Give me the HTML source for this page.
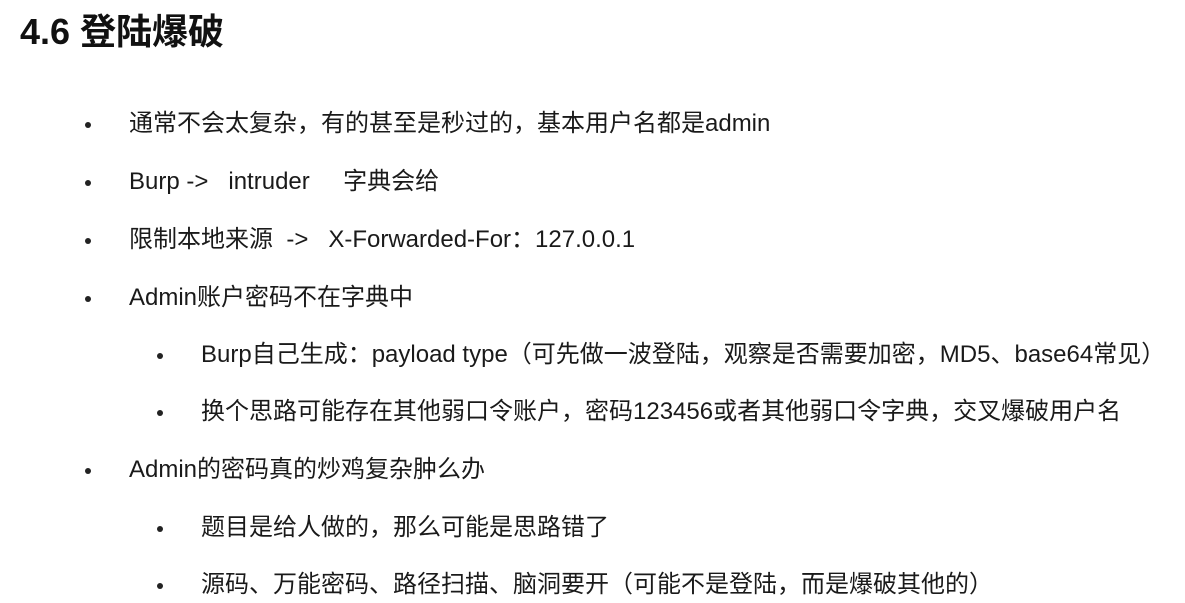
<!DOCTYPE html>
<html><head><meta charset="utf-8"><style>
body{margin:0;width:1185px;height:603px;background:#fff;overflow:hidden;font-family:"Liberation Sans","Noto Sans CJK SC",sans-serif;color:#1a1a1a;position:relative}
.t{position:absolute;left:20px;top:9px;font-size:36px;font-weight:bold;line-height:46px;color:#111}
.l{position:absolute;font-size:24px;line-height:30px;white-space:pre}
.b{position:absolute;width:6px;height:6px;border-radius:50%;background:#222}
</style></head><body>
<div class="t">4.6 登陆爆破</div>
<div class="b" style="left:85px;top:122px"></div><div class="l" style="left:129px;top:109px">通常不会太复杂，有的甚至是秒过的，基本用户名都是admin</div>
<div class="b" style="left:85px;top:180px"></div><div class="l" style="left:129px;top:167px">Burp ->   intruder     字典会给</div>
<div class="b" style="left:85px;top:238px"></div><div class="l" style="left:129px;top:225px">限制本地来源  ->   X-Forwarded-For：127.0.0.1</div>
<div class="b" style="left:85px;top:296px"></div><div class="l" style="left:129px;top:283px">Admin账户密码不在字典中</div>
<div class="b" style="left:157px;top:353px"></div><div class="l" style="left:201px;top:340px">Burp自己生成：payload type（可先做一波登陆，观察是否需要加密，MD5、base64常见）</div>
<div class="b" style="left:157px;top:410px"></div><div class="l" style="left:201px;top:397px">换个思路可能存在其他弱口令账户，密码123456或者其他弱口令字典，交叉爆破用户名</div>
<div class="b" style="left:85px;top:468px"></div><div class="l" style="left:129px;top:455px">Admin的密码真的炒鸡复杂肿么办</div>
<div class="b" style="left:157px;top:526px"></div><div class="l" style="left:201px;top:513px">题目是给人做的，那么可能是思路错了</div>
<div class="b" style="left:157px;top:583px"></div><div class="l" style="left:201px;top:570px">源码、万能密码、路径扫描、脑洞要开（可能不是登陆，而是爆破其他的）</div>
</body></html>
